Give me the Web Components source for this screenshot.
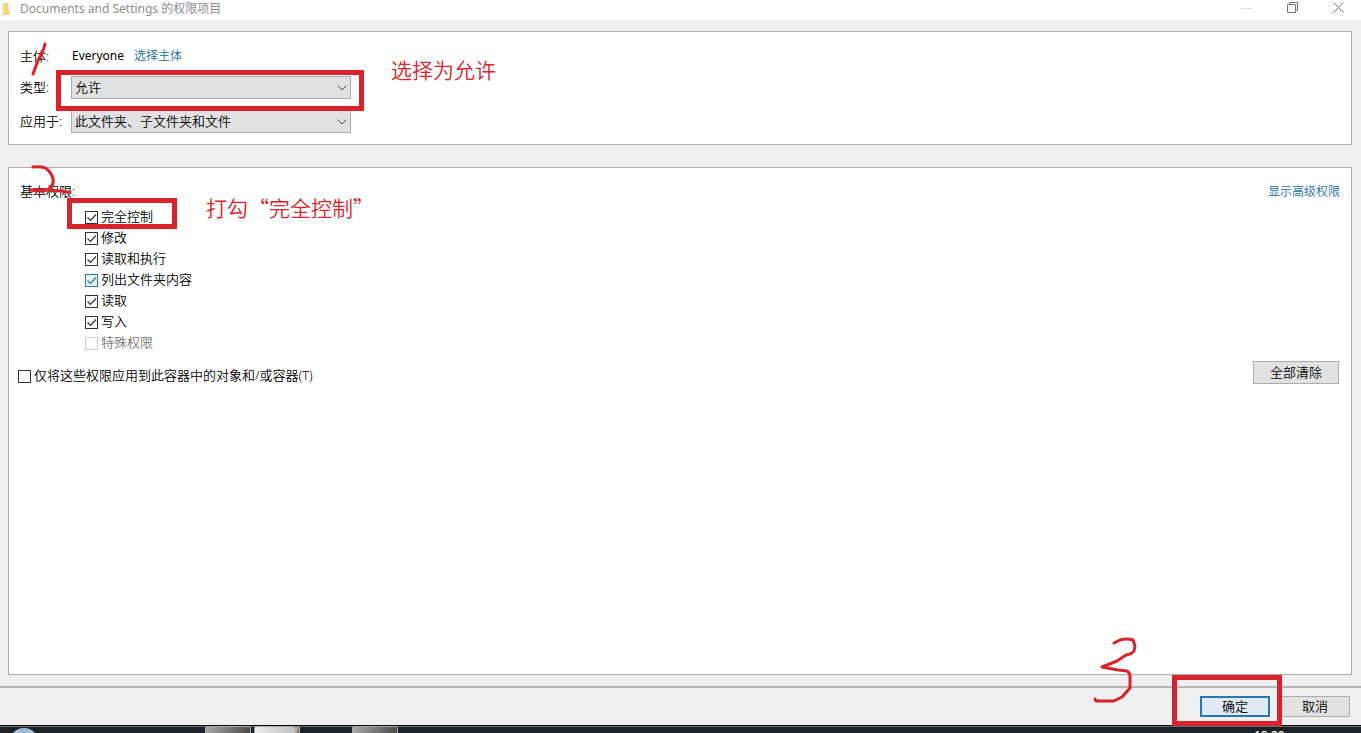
<!DOCTYPE html>
<html lang="zh-CN">
<head>
<meta charset="utf-8">
<title>Documents and Settings 的权限项目</title>
<style>
  html, body { margin: 0; height: 100%; }
  body { font: 350 13px/20px "Noto Sans", "Noto Sans CJK SC", sans-serif; color: #000; --mark: #d9232c; overflow: hidden; }
</style>
</head>
<body>
<permission-window></permission-window>
<script>
const define = (name, html, setup) => customElements.define(name, class extends HTMLElement {
  constructor() {
    super();
    const t = document.createElement('template');
    t.innerHTML = html;
    this.attachShadow({ mode: 'open' }).append(t.content.cloneNode(true));
  }
  connectedCallback() { if (setup) setup(this, this.shadowRoot); }
});

define('title-bar', `
<style>
  :host { display: flex; align-items: center; height: 20px; background: #fff; color: #8c8c8c; font-size: 12px; font-weight: 400; }
  h1 { font: inherit; line-height: 16px; margin: 0 auto 2px 10px; }
  .folder { margin: 0 0 3px 2px; }
  .folder, button svg { display: block; flex: none; }
  .buttons { display: flex; }
  button { width: 46px; height: 20px; padding: 0 0 6px; border: 0; background: none; display: grid; place-items: center; }
</style>
<svg class="folder" width="8" height="13" viewBox="0 0 8 13"><path d="M0 1h6v7l2 2v3H0z" fill="#f3d684"/><path d="M6 2h1v6H6zM0 1h2v11H0z" fill="#fae8b0"/></svg>
<h1><slot></slot></h1>
<div class="buttons">
  <button aria-label="最小化"><svg width="11" height="11"><path d="M0 6.500h11" stroke="#ddd"/></svg></button>
  <button aria-label="还原"><svg width="11" height="11" fill="none" stroke="#777"><path d="M.5 2.500h8v8h-8zM2.500 2.500v-2h8v8h-2"/></svg></button>
  <button aria-label="关闭"><svg width="11" height="11" stroke="#777"><path d="M.5.5l10 10M10.500.5l-10 10"/></svg></button>
</div>`);

define('win-panel', `
<style>:host { display: block; background: #fff; border: 1px solid #acacac; box-sizing: border-box; }</style>
<slot></slot>`);

define('win-link', `
<style>:host { display: inline-block; } a { color: #1a6d9c; font-size: 12px; text-decoration: none; }</style>
<a href="#"><slot></slot></a>`);

define('win-button', `
<style>
  :host { display: block; }
  button { display: block; width: 100%; height: 23px; padding: 0 0 2px; font: inherit; line-height: 18px; color: #000; background: #e1e1e1; border: 1px solid #adadad; }
  :host([compact]) button { height: 21px; }
  :host([primary]) button { border: 2px solid #2a77ad; background: #dfeaf5; line-height: 16px; }
</style>
<button type="button"><slot></slot></button>`);

define('field-row', `
<style>
  :host { display: grid; grid-template-columns: 51px minmax(0, 280px); align-items: center; height: 23px; }
  label { white-space: nowrap; padding-bottom: 2px; }
  .box { display: grid; align-items: center; }
  select, svg { grid-area: 1 / 1; }
  select { appearance: none; width: 100%; height: 23px; margin: 0; padding: 0 20px 0 3px; font: inherit; line-height: 19px; color: #000; background: #e1e1e1; border: 1px solid #acacac; border-radius: 0; }
  svg { justify-self: end; margin-right: 4px; pointer-events: none; }
</style>
<label for="s"></label>
<div class="box"><select id="s"><option></option></select>
<svg width="10" height="6" fill="none" stroke="#444"><path d="M.7.7L5 5l4.300-4.300"/></svg></div>`,
(el, root) => {
  root.querySelector('label').textContent = el.getAttribute('label');
  root.querySelector('option').textContent = el.getAttribute('value');
});

define('check-item', `
<style>
  :host { display: flex; height: 21px; --line: #333; --fill: #fff; }
  :host([hot]) { --line: #2a77ad; --fill: #e8f4fc; }
  :host([disabled]) { --line: #ccc; color: #777; }
  label { display: flex; gap: 3px; line-height: 20px; }
  .box { display: grid; margin-top: 5px; width: 13px; height: 13px; }
  input, svg { grid-area: 1 / 1; }
  input { appearance: none; margin: 0; width: 13px; height: 13px; border: 1px solid var(--line); background: var(--fill); }
  svg { visibility: hidden; pointer-events: none; stroke: var(--line); }
  input:checked + svg { visibility: visible; }
</style>
<label><span class="box"><input type="checkbox"><svg width="13" height="13" fill="none"><path d="M2.500 6.500l3 3 5.500-6" stroke-width="1.200"/></svg></span><span><slot></slot></span></label>`,
(el, root) => {
  const box = root.querySelector('input');
  box.checked = el.hasAttribute('checked');
  box.disabled = el.hasAttribute('disabled');
});

define('mark-frame', `
<style>
  :host { position: absolute; box-sizing: border-box; border: 5px solid var(--mark); pointer-events: none; }
</style>`);

define('mark-text', `
<style>
  :host { position: absolute; font: 350 21px/28px "Noto Sans CJK SC", sans-serif; color: var(--mark); white-space: nowrap; }
</style>
<slot></slot>`);

define('mark-stroke', `
<style>
  :host { position: absolute; pointer-events: none; }
  svg { display: block; overflow: visible; fill: none; stroke: var(--mark); stroke-width: 3; stroke-linecap: round; stroke-linejoin: round; }
</style>
<svg><path/></svg>`,
(el, root) => {
  const svg = root.querySelector('svg');
  svg.setAttribute('width', el.getAttribute('w'));
  svg.setAttribute('height', el.getAttribute('h'));
  root.querySelector('path').setAttribute('d', el.getAttribute('d'));
});

define('task-bar', `
<style>
  :host { display: grid; grid-template-columns: 36px 169px 46px 46px 1fr 107px; height: 8px; box-sizing: border-box; border-top: 1px solid #0a0a0a; background: #1d2128; overflow: hidden; box-shadow: inset 0 1px #666b70; }
  .orb { margin: 2px 0 0 10px; width: 28px; height: 28px; border-radius: 50%; background: radial-gradient(circle at 50% 20%, #8fb3cc, #c9dde9 60%); }
  .tasks { grid-column: 3 / 6; display: flex; }
  .tasks i { width: 46px; height: 12px; box-sizing: border-box; border: 1px solid #aaa; border-radius: 2px; background: linear-gradient(120deg, #aaa, #444); }
  .tasks i:nth-child(2) { width: 42px; margin-left: 3px; background: linear-gradient(120deg, #eee, #bbb); }
  .tasks i:nth-child(3) { width: 4px; }
  .tasks i:nth-child(4) { margin-left: 52px; }
  time { grid-column: 6; margin-top: 2px; font: 500 12px/16px "Noto Sans", sans-serif; color: #fff; }
</style>
<div class="orb"></div><div class="tasks"><i></i><i></i><i></i><i></i></div><time>18:20</time>`);

define('permission-window', `
<style>
  :host { display: flex; flex-direction: column; min-height: 100vh; background: #efefef; }
  win-panel { position: relative; margin: 0 9px 0 8px; }
  .who { margin-top: 11px; padding: 13px 11px 11px; }
  .principal { display: grid; grid-template-columns: 52px auto auto 1fr; height: 20px; margin-bottom: 11px; align-items: center; }
  .name { font-size: 12px; font-weight: 400; margin-right: 10px; }
  field-row + field-row { margin-top: 11px; }
  .rights { flex: 1; margin-top: 22px; padding: 13px 11px 10px 9px; }
  .head { display: flex; justify-content: space-between; padding-left: 2px; height: 20px; }
  .list { margin: 5px 0 0 67px; }
  .foot { display: flex; justify-content: space-between; align-items: flex-start; margin: 8px 1px 0 0; }
  .foot check-item { margin-top: 4px; }
  .foot win-button { width: 86px; }
  footer { position: relative; display: flex; justify-content: flex-end; gap: 10px; height: 39px; margin-top: 11px; padding: 8px 11px 0 0; border-top: 2px solid #b4b4b4; box-sizing: border-box; }
  footer win-button { width: 70px; }
  .f1 { left: 47px; top: 38px; width: 308px; height: 41px; }
  .t1 { left: 382px; top: 23px; }
  .s1 { left: 23px; top: 11px; }
  .f2 { left: 58px; top: 30px; width: 110px; height: 31px; }
  .t2 { left: 197px; top: 25px; }
  .s2 { left: 20px; top: -2px; }
  .f3 { right: 79px; top: -13px; width: 110px; height: 51px; }
  .s3 { right: 225px; top: -50px; }
</style>
<title-bar>Documents and Settings 的权限项目</title-bar>
<win-panel class="who">
  <div class="principal"><span>主体:</span><span class="name">Everyone</span><win-link>选择主体</win-link></div>
  <field-row label="类型:" value="允许"></field-row>
  <field-row label="应用于:" value="此文件夹、子文件夹和文件"></field-row>
  <mark-stroke class="s1" w="14" h="32" d="M13 1C12 6 11 9 8 14S4 23 1 31"></mark-stroke>
  <mark-frame class="f1"></mark-frame>
  <mark-text class="t1">选择为允许</mark-text>
</win-panel>
<win-panel class="rights">
  <div class="head"><span>基本权限:</span><win-link>显示高级权限</win-link></div>
  <div class="list">
    <check-item checked>完全控制</check-item>
    <check-item checked>修改</check-item>
    <check-item checked>读取和执行</check-item>
    <check-item checked hot>列出文件夹内容</check-item>
    <check-item checked>读取</check-item>
    <check-item checked>写入</check-item>
    <check-item disabled>特殊权限</check-item>
  </div>
  <div class="foot"><check-item>仅将这些权限应用到此容器中的对象和/或容器(T)</check-item><win-button>全部清除</win-button></div>
  <mark-stroke class="s2" w="42" h="28" d="M4 1C13 0 18 1 22 8S25 20 18 24C13 26 7 25 1 24C14 23 22 24 41 26"></mark-stroke>
  <mark-frame class="f2"></mark-frame>
  <mark-text class="t2">打勾“完全控制”</mark-text>
</win-panel>
<footer>
  <win-button primary compact>确定</win-button>
  <win-button compact>取消</win-button>
  <mark-stroke class="s3" w="42" h="64" d="M20 5L26 2Q33 0 39 2L41 8L40 13Q38 16 32 17L23 23L8 29L24 32L33 33Q36 35 36 38L36 50L28 59L20 63L2 63L1 61"></mark-stroke>
  <mark-frame class="f3"></mark-frame>
</footer>
<task-bar></task-bar>`);
</script>
</body>
</html>
